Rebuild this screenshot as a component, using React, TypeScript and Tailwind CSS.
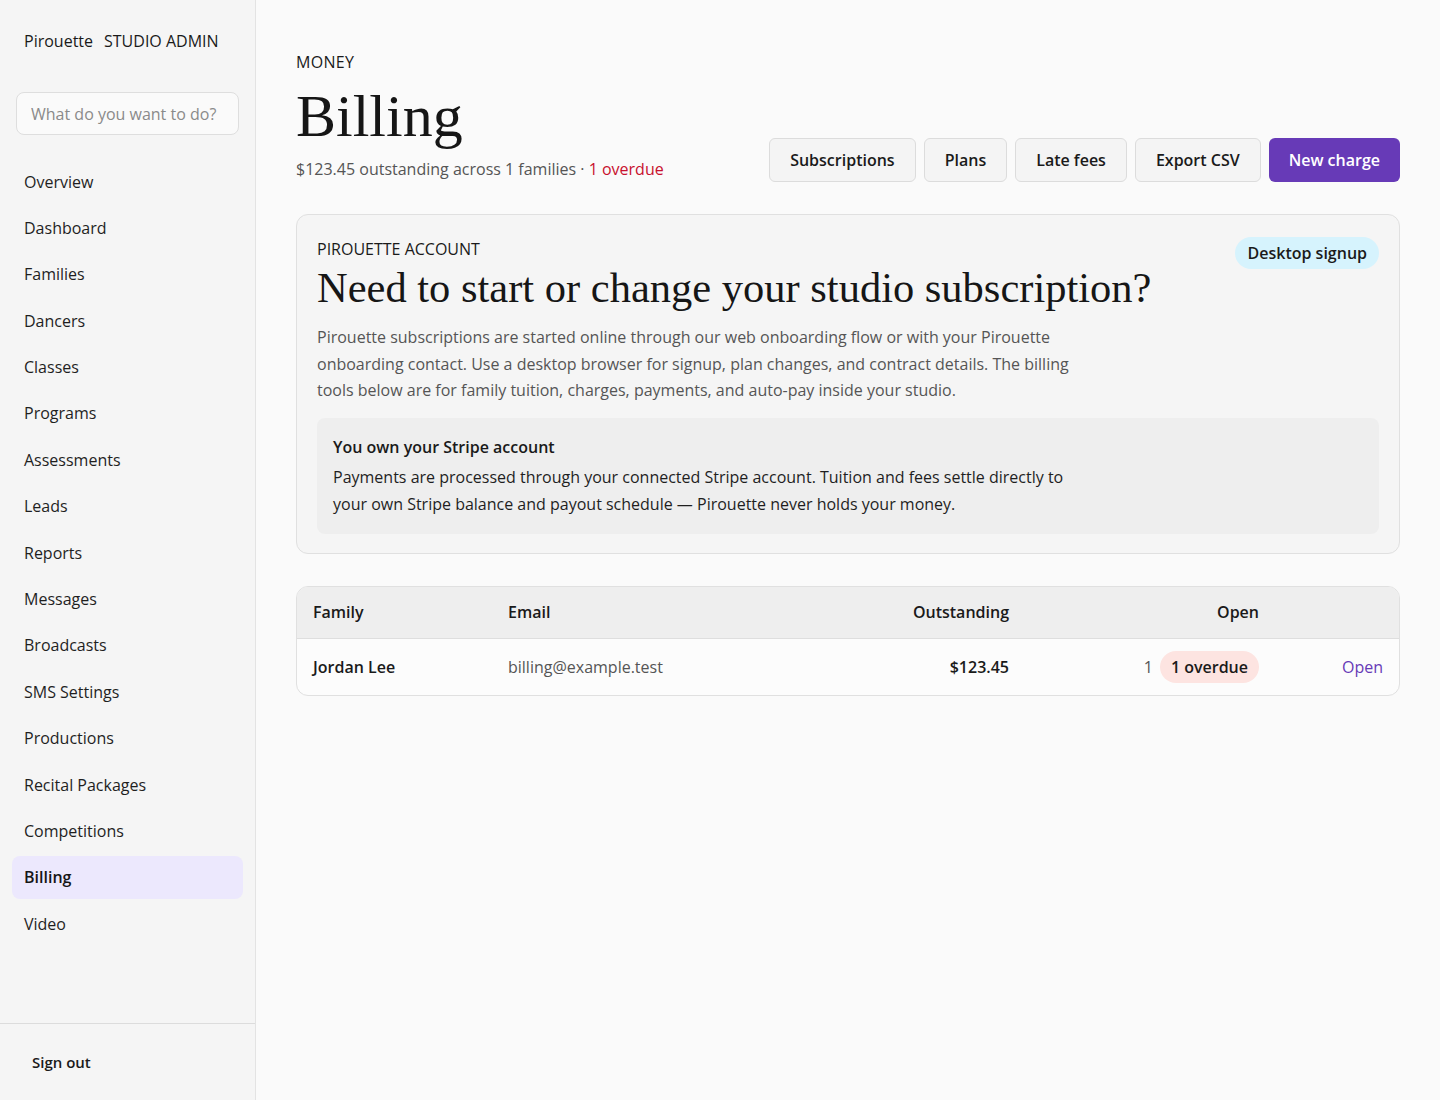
const navItems = [
  "Overview",
  "Dashboard",
  "Families",
  "Dancers",
  "Classes",
  "Programs",
  "Assessments",
  "Leads",
  "Reports",
  "Messages",
  "Broadcasts",
  "SMS Settings",
  "Productions",
  "Recital Packages",
  "Competitions",
  "Billing",
  "Video",
];

const actions = ["Subscriptions", "Plans", "Late fees", "Export CSV"];

const sans = "font-['Open_Sans','Noto_Sans',sans-serif]";
const serif = "font-['Liberation_Serif','DejaVu_Serif',serif]";

export default function App() {
  return (
    <div className={`flex min-h-[1100px] bg-[#fafafa] text-[#1a1a1a] ${sans}`}>
      {/* Sidebar */}
      <aside className="flex w-[256px] shrink-0 flex-col border-r border-[#e3e3e3] bg-[#f5f5f5]">
        <div className="px-6 pt-[30px] text-[16px] leading-[22px] text-[#1a1a1a]">
          <span>Pirouette</span>
          <span className="ml-[11px]">STUDIO ADMIN</span>
        </div>

        <div className="px-4 pt-[40px]">
          <input
            placeholder="What do you want to do?"
            className="h-[43px] w-full rounded-lg border border-[#dedede] bg-[#fafafa] px-[14px] text-[16px] text-[#1a1a1a] outline-none placeholder:text-[#8a8a8a]"
          />
        </div>

        <nav className="mt-[25px] flex flex-col gap-[3.4px] px-3">
          {navItems.map((item) => (
            <a
              key={item}
              className={`flex h-[43px] items-center rounded-lg px-3 text-[16px] ${
                item === "Billing"
                  ? "bg-[#ece8fd] font-semibold text-[#161616]"
                  : "text-[#1f1f1f]"
              }`}
            >
              {item}
            </a>
          ))}
        </nav>

        <div className="mt-auto border-t border-[#dcdcdc] px-8 pb-[26px] pt-[26px]">
          <button className="text-[15px] font-semibold text-[#1a1a1a]">Sign out</button>
        </div>
      </aside>

      {/* Main */}
      <main className="flex-1 px-10 pt-[50px]">
        <div className="flex items-end justify-between">
          <div>
            <div className="text-[16px] leading-6 tracking-[0.02em] text-[#1a1a1a]">MONEY</div>
            <h1 className={`mt-[10px] text-[60px] leading-[64px] text-[#161616] ${serif}`}>Billing</h1>
            <p className="mt-[9px] text-[16px] leading-6 text-[#555]">
              $123.45 outstanding across 1 families ·{" "}
              <span className="text-[#c8102e]">1 overdue</span>
            </p>
          </div>

          <div className="-mb-[1px] flex gap-2">
            {actions.map((a) => (
              <button
                key={a}
                className="h-[44px] rounded-md border border-[#dcdcdc] bg-[#f4f4f4] px-5 text-[16px] font-semibold text-[#1a1a1a]"
              >
                {a}
              </button>
            ))}
            <button className="h-[44px] rounded-md bg-[#673ab7] px-5 text-[16px] font-semibold text-white">
              New charge
            </button>
          </div>
        </div>

        {/* Account card */}
        <section className="mt-[33px] rounded-xl border border-[#e0e0e0] bg-[#f5f5f5] px-5 pb-[19px] pt-[22px]">
          <div className="flex items-start justify-between">
            <div>
              <div className="text-[16px] leading-6 text-[#1a1a1a]">PIROUETTE ACCOUNT</div>
              <h2 className={`mt-[3px] text-[42.5px] leading-[48px] text-[#161616] ${serif}`}>
                Need to start or change your studio subscription?
              </h2>
            </div>
            <span className="rounded-full bg-[#d6f3fd] px-3 py-[4px] text-[16px] font-semibold text-[#1a1a1a]">
              Desktop signup
            </span>
          </div>
          <p className="mt-[12px] max-w-[770px] text-[16px] leading-[26.5px] text-[#555]">
            Pirouette subscriptions are started online through our web onboarding flow or with your Pirouette
            onboarding contact. Use a desktop browser for signup, plan changes, and contract details. The billing
            tools below are for family tuition, charges, payments, and auto-pay inside your studio.
          </p>

          <div className="mt-[14px] rounded-lg bg-[#eeeeee] px-4 pb-[16px] pt-[17px]">
            <div className="text-[16px] font-semibold leading-6 text-[#1a1a1a]">You own your Stripe account</div>
            <p className="mt-[5px] max-w-[750px] text-[16px] leading-[27px] text-[#1f1f1f]">
              Payments are processed through your connected Stripe account. Tuition and fees settle directly to
              your own Stripe balance and payout schedule — Pirouette never holds your money.
            </p>
          </div>
        </section>

        {/* Families table */}
        <div className="mt-8 overflow-hidden rounded-xl border border-[#e0e0e0] bg-[#fcfcfc]">
          <table className="w-full border-collapse text-[16px]">
            <thead>
              <tr className="h-[52px] border-b border-[#dedede] bg-[#eeeeee] text-[#1a1a1a]">
                <th className="w-[211px] pl-4 text-left font-semibold">Family</th>
                <th className="text-left font-semibold">Email</th>
                <th className="w-[200px] text-right font-semibold">Outstanding</th>
                <th className="w-[250px] text-right font-semibold">Open</th>
                <th className="w-[140px] pr-4"></th>
              </tr>
            </thead>
            <tbody>
              <tr className="h-[56px]">
                <td className="pl-4 font-semibold text-[#1a1a1a]">Jordan Lee</td>
                <td className="text-[#555]">billing@example.test</td>
                <td className="text-right font-semibold text-[#1a1a1a]">$123.45</td>
                <td className="text-right">
                  <span className="text-[#555]">1</span>
                  <span className="ml-[7px] inline-block rounded-full bg-[#fde4e1] px-[11px] py-[4px] font-semibold text-[#1a1a1a]">
                    1 overdue
                  </span>
                </td>
                <td className="pr-4 text-right">
                  <a className="text-[#673ab7]">Open</a>
                </td>
              </tr>
            </tbody>
          </table>
        </div>
      </main>
    </div>
  );
}
